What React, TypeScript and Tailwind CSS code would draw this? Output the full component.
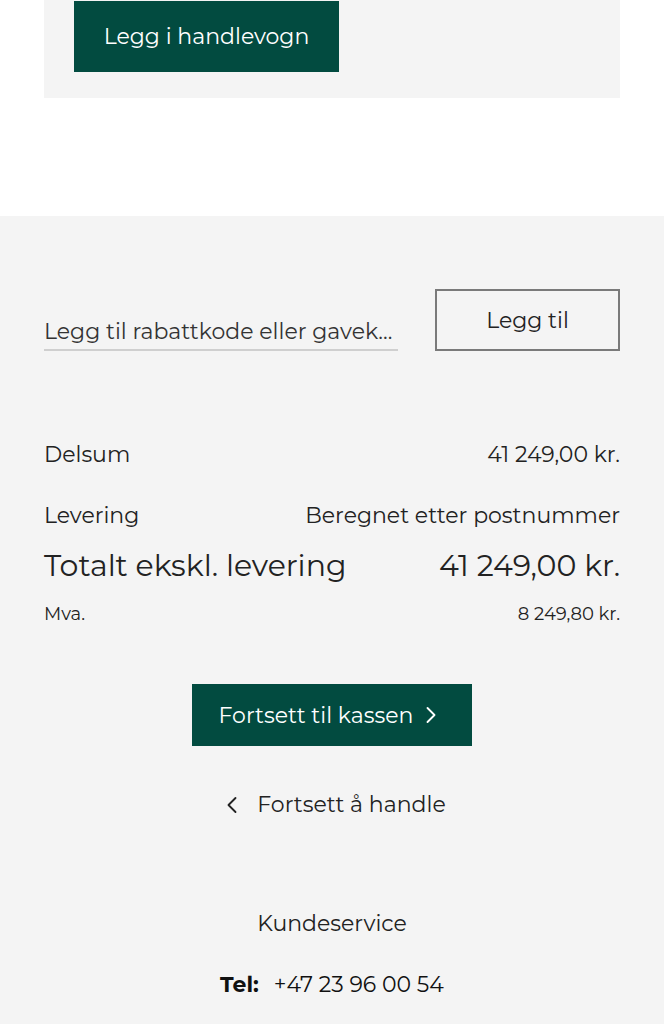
import { ChevronLeft, ChevronRight } from 'lucide-react';

const FONT = "font-['Montserrat','Open_Sans',sans-serif]";

function SummaryRow({ label, value, size }: { label: string; value: string; size: string }) {
  return (
    <div className={`flex items-center justify-between text-[#222] ${size}`}>
      <span>{label}</span>
      <span>{value}</span>
    </div>
  );
}

export default function App() {
  return (
    <div className={`${FONT} min-h-[1024px] bg-[#f4f4f4]`}>
      <div className="bg-white pb-[118px]">
        <div className="mx-[44px] h-[98px] bg-[#f4f4f4] pl-[30px] pt-px">
          <button className="h-[71px] w-[265px] bg-[#024b40] text-[22px] text-white">Legg i handlevogn</button>
        </div>
      </div>

      <div className="px-[44px] pt-[73px]">
        <div className="flex items-end justify-between">
          <div className="w-[354px] whitespace-nowrap border-b-2 border-[#cfcfcf] pb-[2px] text-[22px] leading-[30px] text-[#333]">
            Legg til rabattkode eller gavek...
          </div>
          <button className="h-[62px] w-[185px] border-2 border-[#7a7a7a] text-[22px] text-[#222]">Legg til</button>
        </div>

        <div className="mt-[89px] flex flex-col">
          <SummaryRow label="Delsum" value="41 249,00 kr." size="text-[22px] leading-[30px]" />
          <div className="mt-[31px]">
            <SummaryRow label="Levering" value="Beregnet etter postnummer" size="text-[22px] leading-[30px]" />
          </div>
          <div className="mt-[15px]">
            <SummaryRow label="Totalt ekskl. levering" value="41 249,00 kr." size="text-[30px] leading-[40px]" />
          </div>
          <div className="mt-[16px]">
            <SummaryRow label="Mva." value="8 249,80 kr." size="text-[18px] leading-[24px]" />
          </div>
        </div>

        <div className="mt-[58px] flex justify-center">
          <button className="flex h-[62px] w-[280px] items-center justify-center gap-[4px] bg-[#024b40] text-[22px] text-white">
            Fortsett til kassen
            <ChevronRight size={28} strokeWidth={1.6} />
          </button>
        </div>

        <div className="mt-[44px] flex items-center justify-center gap-[11px] text-[22px] leading-[30px] text-[#222]">
          <ChevronLeft size={28} strokeWidth={1.6} />
          <span>Fortsett å handle</span>
        </div>

        <div className="mt-[89px] text-center text-[22px] leading-[30px] text-[#222]">Kundeservice</div>

        <div className="mt-[31px] flex items-center justify-center gap-[15px] text-[22px] leading-[30px] text-[#111]">
          <span className="font-bold">Tel:</span>
          <span>+47 23 96 00 54</span>
        </div>
      </div>
    </div>
  );
}
